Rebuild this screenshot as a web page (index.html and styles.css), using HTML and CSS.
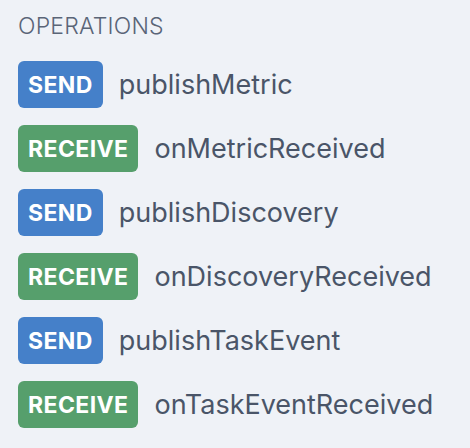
FILE: index.html
```html
<!DOCTYPE html>
<html>
<head>
<meta charset="utf-8">
<link rel="stylesheet" href="styles.css">
</head>
<body>
<div class="panel">
  <div class="heading">OPERATIONS</div>
  <ul class="ops">
    <li class="op"><span class="badge send">SEND</span><span class="name">publishMetric</span></li>
    <li class="op"><span class="badge receive">RECEIVE</span><span class="name">onMetricReceived</span></li>
    <li class="op"><span class="badge send">SEND</span><span class="name">publishDiscovery</span></li>
    <li class="op"><span class="badge receive">RECEIVE</span><span class="name">onDiscoveryReceived</span></li>
    <li class="op"><span class="badge send">SEND</span><span class="name">publishTaskEvent</span></li>
    <li class="op"><span class="badge receive">RECEIVE</span><span class="name">onTaskEventReceived</span></li>
  </ul>
</div>
</body>
</html>
```
FILE: styles.css
```css
html, body {
  margin: 0;
  padding: 0;
  background: #eff2f7;
}
body {
  font-family: Inter, "Noto Sans", sans-serif;
  color: #4a5568;
}
.panel {
  padding: 12px 18px;
}
.heading {
  font-size: 23px;
  font-weight: 300;
  line-height: 28px;
  color: #5a6577;
  letter-spacing: 0.2px;
}
.ops {
  list-style: none;
  margin: 21px 0 0 0;
  padding: 0;
  display: flex;
  flex-direction: column;
  gap: 17px;
}
.op {
  display: flex;
  align-items: center;
  gap: 16px;
}
.badge {
  display: inline-flex;
  align-items: center;
  justify-content: center;
  height: 47px;
  padding: 0 10px;
  border-radius: 6px;
  color: #fff;
  font-weight: 700;
  font-size: 23px;
  letter-spacing: 0.4px;
  box-sizing: border-box;
}
.send { background: #4580c9; }
.receive { background: #569f6c; }
.name {
  font-size: 27px;
  color: #4a5568;
  line-height: 32px;
}
```
